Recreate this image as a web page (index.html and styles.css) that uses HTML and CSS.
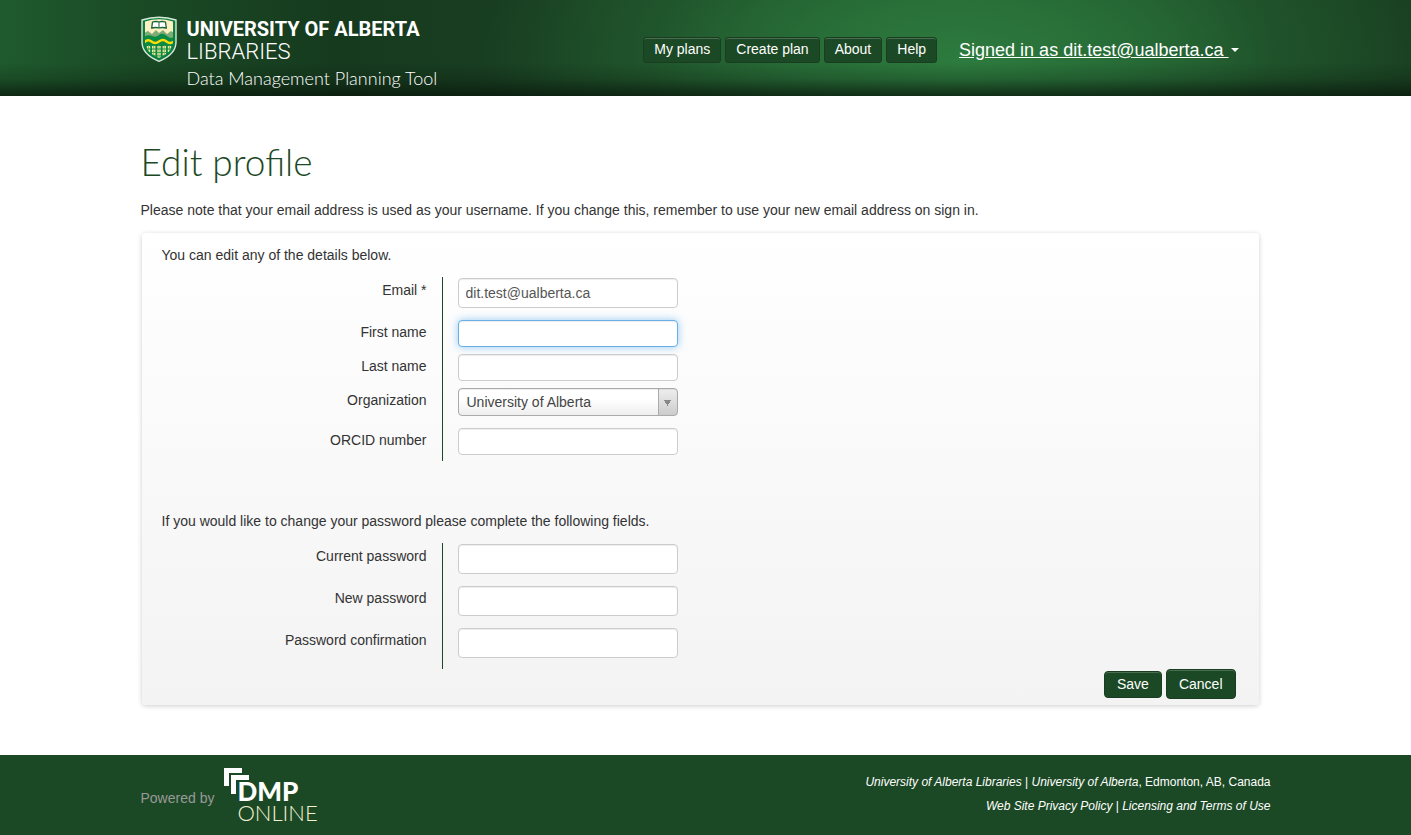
FILE: index.html
```html
<!DOCTYPE html>
<html lang="en">
<head>
<meta charset="utf-8">
<title>Edit profile - Data Management Planning Tool</title>
<link rel="stylesheet" href="styles.css">
</head>
<body>
<header class="site-header">
  <div class="container header-inner">
    <a class="brand" href="#">
      <svg class="shield" viewBox="0 0 36 46" aria-hidden="true">
        <defs><clipPath id="field"><path d="M4 5.500Q18 1 32 5.500V26C32 34 25 39 18 42C11 39 4 34 4 26Z"/></clipPath></defs>
        <path d="M1 4Q18-1.500 35 4V26C35 37 26 42 18 45.300C10 42 1 37 1 26Z" fill="#0a7f41" stroke="#d8e8d8" stroke-width="1.400"/>
        <g clip-path="url(#field)">
          <path d="M3 0h30v22H3z" fill="#fdf1c4"/>
          <path d="M3 17l4-2 4 3 4-4 3 3 4-3 4 4 4-3 3 2v6H3z" fill="#7fab74"/>
          <path d="M3 21q4-3 8-1t7-1 8 1 7 0v23H3z" fill="#0a8a45"/>
          <path d="M3 26.500q4-4 7.500-1t7.500 0 7.500 0 7.500 0" fill="none" stroke="#fddb05" stroke-width="2.400"/>
          <g fill="none" stroke="#f0e89a" stroke-width="3.400" stroke-dasharray="2.600 .8">
            <path d="M7.500 30v7M12.700 30v11M18 30v13M23.300 30v11M28.500 30v7"/>
          </g>
          <path d="M7.500 29v8M12.700 29v12M18 29v14M23.300 29v12M28.500 29v8" stroke="#5da653" stroke-width=".7"/>
        </g>
        <path d="M11.500 6q3.500-1 6.500 0 3-1 6.500 0l.8 6q-4-1-7.300 0-3.300-1-7.300 0Z" fill="#fff" stroke="#17643a" stroke-width="1.300"/>
        <path d="M18 6v6" stroke="#17643a"/>
      </svg>
      <span class="brand-text">
        <span class="brand-name">UNIVERSITY OF ALBERTA</span>
        <span class="brand-unit">LIBRARIES</span>
        <span class="brand-tool">Data Management Planning Tool</span>
      </span>
    </a>
    <nav class="main-nav">
      <a class="nav-button" href="#">My plans</a>
      <a class="nav-button" href="#">Create plan</a>
      <a class="nav-button" href="#">About</a>
      <a class="nav-button" href="#">Help</a>
      <button class="account" type="button"><span class="account-name">Signed in as dit.test@ualberta.ca&nbsp;</span><span class="caret"></span></button>
    </nav>
  </div>
</header>

<main class="container page">
  <h1>Edit profile</h1>
  <p class="note">Please note that your email address is used as your username. If you change this, remember to use your new email address on sign in.</p>
  <form class="panel">
    <p class="lead">You can edit any of the details below.</p>
    <div class="fields">
      <div class="row"><label for="email">Email *</label><div class="cell"><input class="tall" id="email" type="email" value="dit.test@ualberta.ca"></div></div>
      <div class="row"><label for="first">First name</label><div class="cell tight"><input class="active" id="first" type="text"></div></div>
      <div class="row"><label for="last">Last name</label><div class="cell tight"><input id="last" type="text"></div></div>
      <div class="row"><label for="org">Organization</label><div class="cell"><select id="org"><option>University of Alberta</option></select></div></div>
      <div class="row"><label for="orcid">ORCID number</label><div class="cell tight"><input id="orcid" type="text"></div></div>
    </div>
    <p class="lead lead-password">If you would like to change your password please complete the following fields.</p>
    <div class="fields">
      <div class="row"><label for="current">Current password</label><div class="cell"><input class="tall" id="current" type="password"></div></div>
      <div class="row"><label for="new">New password</label><div class="cell"><input class="tall" id="new" type="password"></div></div>
      <div class="row"><label for="confirm">Password confirmation</label><div class="cell"><input class="tall" id="confirm" type="password"></div></div>
    </div>
    <div class="actions">
      <button class="save" type="submit">Save</button>
      <button class="cancel" type="button">Cancel</button>
    </div>
  </form>
</main>

<footer class="site-footer">
  <div class="container footer-inner">
    <div class="powered">
      <span>Powered by</span>
      <div class="dmp">
        <svg class="dmp-mark" viewBox="0 0 26 27" aria-hidden="true">
          <path d="M1 1h18v5H6v13H1z" fill="#fff"/>
          <path d="M8 8h18v5H13v14H8z" fill="#fff"/>
        </svg>
        <div class="dmp-text">
          <span class="dmp-bold">DMP</span>
          <span class="dmp-light">ONLINE</span>
        </div>
      </div>
    </div>
    <div class="links">
      <p><a href="#">University of Alberta Libraries</a> | <a href="#">University of Alberta</a>, Edmonton, AB, Canada</p>
      <p><a href="#">Web Site Privacy Policy</a> | <a href="#">Licensing and Terms of Use</a></p>
    </div>
  </div>
</footer>
</body>
</html>
```
FILE: styles.css
```css
* { box-sizing: border-box; }

body {
  margin: 0;
  min-height: 100vh;
  display: flex;
  flex-direction: column;
  background: #fff;
  color: #333;
  font: 14px/20px "Liberation Sans", Arial, sans-serif;
}

p, h1 { margin: 0; }
a { color: inherit; text-decoration: none; }

.container {
  width: 100%;
  max-width: 1130px;
  margin: 0 auto;
}

.site-header {
  background:
    linear-gradient(to bottom, transparent 65%, rgba(8, 20, 10, .2) 82%, rgba(8, 22, 11, .75) 100%),
    radial-gradient(ellipse 480px 220px at 68% 60px, #2d7b3e 0%, #286e38 30%, rgba(36, 96, 48, .5) 65%, transparent 100%),
    linear-gradient(to right, #1f5a2d 0%, #1a4a25 10%, #163a1e 24%, #193f22 38%, #1f542b 55%, #225c2e 75%, #1b4625 90%, #193f21 100%);
}

.header-inner {
  min-height: 96px;
  display: flex;
  justify-content: space-between;
  align-items: flex-start;
}

.brand { display: flex; gap: 10px; padding-top: 16px; color: #fff; }
.shield { width: 36px; height: 46px; }
.brand-text { display: flex; flex-direction: column; padding-top: 2px; }
.brand-name { font: 700 20px/22px Roboto, sans-serif; }
.brand-unit { font: 300 22px/24px Roboto, sans-serif; }
.brand-tool { font: 300 18px/28px Lato, sans-serif; }

.main-nav {
  display: flex;
  align-items: center;
  gap: 4px;
  padding: 37px 32px 0 0;
}
.nav-button {
  padding: 1px 10px 3px;
  border: 1px solid #1a3d22;
  border-radius: 3px;
  background: #1c4925;
  box-shadow: inset 0 1px 0 rgba(255, 255, 255, .2);
  color: #fff;
  line-height: 20px;
}
.account {
  display: flex;
  align-items: center;
  gap: 2px;
  margin-left: 18px;
  padding: 0;
  border: 0;
  background: none;
  color: #fff;
  font: 18px/26px "Liberation Sans", Arial, sans-serif;
}
.account-name { text-decoration: underline; }
.caret {
  border: 4px solid transparent;
  border-top-color: #fff;
  border-bottom: 0;
}

.page { flex: 1; padding: 41px 0 49px; }
h1 {
  color: #1c4925;
  font: 300 37px/50px Lato, sans-serif;
}
.note { margin-top: 13px; }

.panel {
  margin: 13px 12px 0 1px;
  padding: 12px 23px 6px 20px;
  border-radius: 4px;
  background: linear-gradient(#fff, #f3f3f3);
  box-shadow: 0 1px 5px rgba(0, 0, 0, .2);
}
.fields { margin-top: 12px; }
.row { display: flex; align-items: stretch; }
.row label {
  width: 281px;
  padding: 3px 15px 0 0;
  border-right: 1px solid #1c4925;
  text-align: right;
}
.cell { padding: 1px 0 11px 15px; }
.cell.tight { padding-bottom: 6px; }

input, select {
  display: block;
  width: 220px;
  height: 27px;
  margin: 0;
  padding: 2px 7px;
  border: 1px solid #ccc;
  border-radius: 4px;
  outline: 0;
  background: #fff;
  box-shadow: inset 0 1px 1px rgba(0, 0, 0, .075);
  color: #555;
  font: 14px/20px "Liberation Sans", Arial, sans-serif;
}
.tall { height: 30px; }
.active {
  border-color: #66afe9;
  box-shadow: inset 0 1px 1px rgba(0, 0, 0, .075), 0 0 8px rgba(82, 168, 236, .6);
}
select {
  height: 28px;
  padding: 0 28px 0 8px;
  border-color: #aaa;
  appearance: none;
  background:
    conic-gradient(from -30deg at 50% 100%, #888 60deg, transparent 0) right 6px top 11px / 7px 6px no-repeat,
    linear-gradient(#aaa, #aaa) right 18px top / 1px 100% no-repeat,
    linear-gradient(#eee, #ccc) right / 18px 100% no-repeat,
    linear-gradient(#fff 40%, #eee);
  color: #444;
}

.lead-password { margin-top: 50px; }

.actions { display: flex; justify-content: flex-end; align-items: center; gap: 4px; }
.actions button {
  padding: 0 12px;
  border: 1px solid #1a3d22;
  border-radius: 4px;
  background: #1c4925;
  box-shadow: inset 0 1px 0 rgba(255, 255, 255, .2);
  color: #fff;
  font: 14px/20px "Liberation Sans", Arial, sans-serif;
}
.actions .save { height: 27px; }
.actions .cancel { height: 30px; }

.site-footer { background: #1c4925; color: #fff; }
.footer-inner {
  min-height: 80px;
  display: flex;
  justify-content: space-between;
  align-items: center;
}
.powered { display: flex; align-items: center; gap: 9px; padding-top: 6px; color: #999; }
.dmp { display: grid; margin-top: -6px; }
.dmp-mark { grid-area: 1 / 1; width: 26px; height: 27px; }
.dmp-text { grid-area: 1 / 1; display: flex; flex-direction: column; padding: 13px 0 0 14px; }
.dmp-bold { color: #fff; font: 900 26px/22px Lato, sans-serif; }
.dmp-light { color: #f3f0d0; font: 300 22px/22px Lato, sans-serif; }
.links { padding-bottom: 2px; font-size: 12px; line-height: 24px; text-align: right; }
.links a { font-style: italic; }
```
